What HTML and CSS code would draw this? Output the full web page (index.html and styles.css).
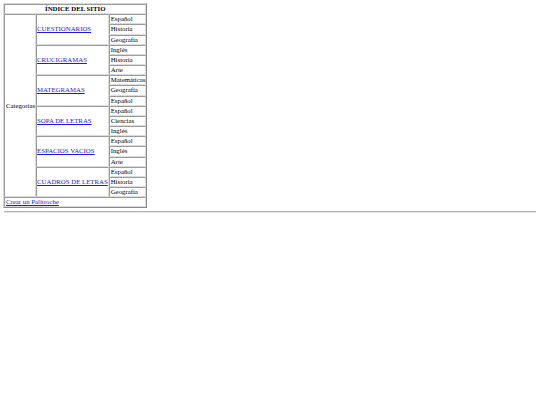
FILE: index.html
```html
<!DOCTYPE html>
<html lang="es">
<head>
<meta charset="utf-8">
<title>Índice del sitio</title>
<link rel="stylesheet" href="styles.css">
</head>
<body>
<table class="idx">
  <tr><th colspan="3" class="head">ÍNDICE DEL SITIO</th></tr>
  <tr>
    <td rowspan="18" class="cat">Categorías</td>
    <td rowspan="3" class="game"><a href="#">CUESTIONARIOS</a></td>
    <td class="sub">Español</td>
  </tr>
  <tr><td class="sub">Historia</td></tr>
  <tr><td class="sub">Geografía</td></tr>
  <tr><td rowspan="3" class="game"><a href="#">CRUCIGRAMAS</a></td><td class="sub">Inglés</td></tr>
  <tr><td class="sub">Historia</td></tr>
  <tr><td class="sub">Arte</td></tr>
  <tr><td rowspan="3" class="game"><a href="#">MATEGRAMAS</a></td><td class="sub">Matemáticas</td></tr>
  <tr><td class="sub">Geografía</td></tr>
  <tr><td class="sub">Español</td></tr>
  <tr><td rowspan="3" class="game"><a href="#">SOPA DE LETRAS</a></td><td class="sub">Español</td></tr>
  <tr><td class="sub">Ciencias</td></tr>
  <tr><td class="sub">Inglés</td></tr>
  <tr><td rowspan="3" class="game"><a href="#">ESPACIOS VACIOS</a></td><td class="sub">Español</td></tr>
  <tr><td class="sub">Inglés</td></tr>
  <tr><td class="sub">Arte</td></tr>
  <tr><td rowspan="3" class="game"><a href="#">CUADROS DE LETRAS</a></td><td class="sub">Español</td></tr>
  <tr><td class="sub">Historia</td></tr>
  <tr><td class="sub">Geografía</td></tr>
  <tr><td colspan="3" class="foot"><a href="#">Crear un Palitroche</a></td></tr>
</table>
<hr class="rule">
</body>
</html>
```
FILE: styles.css
```css
html, body {
  background: #ffffff;
}
body {
  margin: 0;
  padding: 3px 4px 0 4px;
  font-family: "Liberation Serif", "Times New Roman", serif;
  font-size: 6.8px;
  line-height: 8.17px;
  color: #000000;
}
.idx {
  border: 1px solid;
  border-color: #d8d8d8 #8a8a8a #8a8a8a #d8d8d8;
  border-spacing: 0;
  margin-left: -1px;
}
.idx th,
.idx td {
  border: 1px solid;
  border-color: #9a9a9a #dcdcdc #dcdcdc #9a9a9a;
  padding: 0;
  white-space: nowrap;
  font-size: 6.8px;
  line-height: 8.17px;
}
.idx .head {
  font-weight: bold;
  text-align: center;
}
.idx .cat {
  vertical-align: middle;
  padding-left: 1px;
}
.idx .game {
  vertical-align: middle;
}
.idx .sub {
  padding-left: 1px;
}
.idx .foot {
  padding-left: 1px;
}
.idx a {
  color: #1a1ae6;
  text-decoration: underline;
}
.rule {
  margin: 3px 0 0 0;
  border: 0;
  border-top: 1px solid #b4b4b4;
  border-bottom: 1px solid #e6e6e6;
  height: 0;
}
```
